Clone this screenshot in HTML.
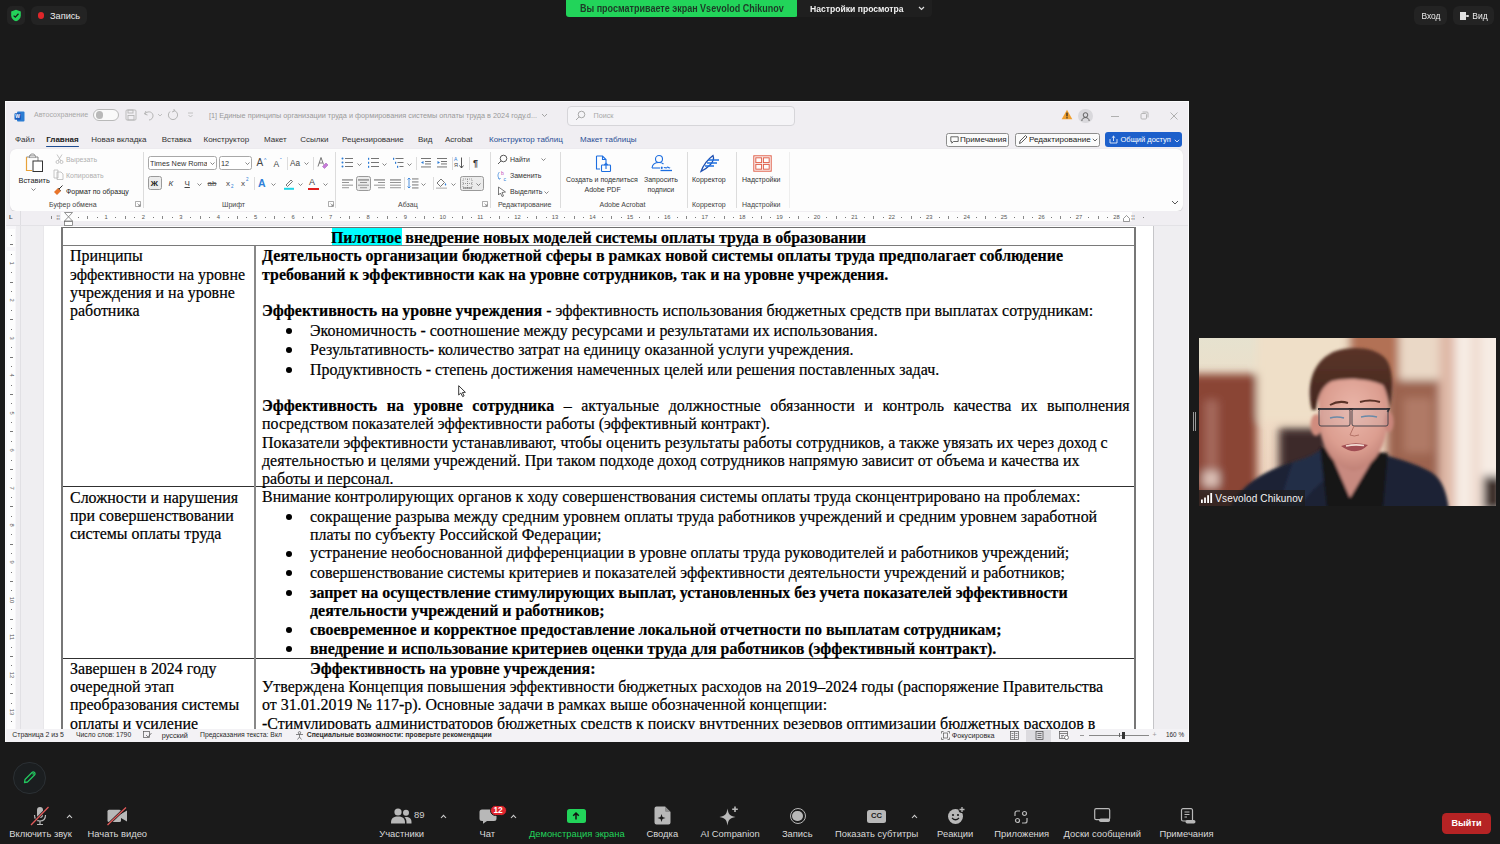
<!DOCTYPE html><html><head><meta charset="utf-8"><style>
*{box-sizing:border-box}
html,body{margin:0;padding:0}
body{width:1500px;height:844px;overflow:hidden;background:#1a1a1a;position:relative;font-family:"Liberation Sans",sans-serif}
.a{position:absolute}
.t{position:absolute;white-space:pre;line-height:1}
.dl{position:absolute;white-space:pre;font-family:"Liberation Serif",serif;font-size:15.95px;line-height:18px;color:#000;-webkit-text-stroke:0.2px #000}
.dj{text-align:justify;text-align-last:justify;white-space:normal}
.bul{position:absolute;width:6px;height:6px;border-radius:50%;background:#000}
.zl{position:absolute;white-space:pre;font-size:9.4px;color:#d9d9d9;line-height:1}
.tab{position:absolute;white-space:pre;font-size:8px;color:#333;top:136px;line-height:1}
.rl{position:absolute;white-space:pre;font-size:7px;color:#333;line-height:1}
.gl{position:absolute;white-space:pre;font-size:7px;color:#444;line-height:1;top:200.5px}
.sep{position:absolute;width:1px;background:#dcdcdc}
.st{position:absolute;white-space:pre;font-size:6.9px;color:#2a2a2a;line-height:1;top:732.1px}
</style></head><body>
<div class="a" style="left:0;top:0;width:1500px;height:844px;background:#1a1a1a"></div>
<div class="a" style="left:7px;top:6px;width:18px;height:19px;border-radius:5px;background:#232323"></div>
<svg class="a" style="left:10px;top:9px" width="12" height="13" viewBox="0 0 12 13"><path d="M6 0.8 L10.8 2.6 V6.4 C10.8 9.2 8.8 11.3 6 12.2 C3.2 11.3 1.2 9.2 1.2 6.4 V2.6 Z" fill="#24d25a"/><path d="M3.6 6.6 L5.3 8.2 L8.5 4.8" stroke="#1a1a1a" stroke-width="1.3" fill="none"/></svg>
<div class="a" style="left:31px;top:6px;width:56px;height:19px;border-radius:6px;background:#232323"></div>
<div class="a" style="left:37.5px;top:12px;width:6.5px;height:6.5px;border-radius:50%;background:#e0262a"></div>
<div class="t" style="left:50px;top:11.5px;font-size:9.2px;color:#ececec">Запись</div>

<div class="a" style="left:566px;top:-4px;width:232px;height:21px;border-radius:0 0 3px 3px;background:#22d45a"></div>
<div class="a" style="left:797px;top:-4px;width:135px;height:21px;border-radius:0 0 4px 0;background:#1f1f1f"></div>
<div class="t" style="left:580px;top:4.2px;font-size:9px;font-weight:bold;color:#1d3a27;transform:scaleY(1.15);transform-origin:0 0">Вы просматриваете экран Vsevolod Chikunov</div>
<div class="t" style="left:810px;top:4.2px;font-size:8.6px;font-weight:bold;color:#f2f2f2;transform:scaleY(1.15);transform-origin:0 0">Настройки просмотра</div>
<svg class="a" style="left:918px;top:6px" width="7" height="5" viewBox="0 0 7 5"><path d="M1 1 L3.5 3.5 L6 1" stroke="#ddd" stroke-width="1.2" fill="none"/></svg>

<div class="a" style="left:1414px;top:6px;width:33px;height:19px;border-radius:6px;background:#232323"></div>
<div class="t" style="left:1421.5px;top:10.5px;font-size:8.4px;color:#ececec;transform:scaleY(1.12);transform-origin:0 0">Вход</div>
<div class="a" style="left:1453px;top:6px;width:41px;height:19px;border-radius:6px;background:#232323"></div>
<div class="a" style="left:1460px;top:11.7px;width:5.5px;height:8.5px;background:#e0e0e0"></div>
<div class="a" style="left:1466px;top:14.5px;width:2.5px;height:2.5px;border-radius:50%;background:#e0e0e0"></div>
<div class="t" style="left:1472.3px;top:10.5px;font-size:8.5px;color:#ececec;transform:scaleY(1.12);transform-origin:0 0">Вид</div>

<div class="a" style="left:5px;top:101px;width:1184px;height:641px;background:#fbfbfc"></div>
<div class="a" style="left:6px;top:102px;width:1182px;height:639px;background:#f0eef2"></div>
<svg class="a" style="left:13.5px;top:110.5px" width="11" height="11" viewBox="0 0 11 11"><rect x="3" y="0.5" width="7.5" height="10" rx="1" fill="#2b7cd3"/><rect x="0.5" y="2.3" width="6.5" height="6.5" rx="0.8" fill="#185abd"/><text x="3.7" y="7.4" font-size="5" font-weight="bold" fill="#fff" text-anchor="middle" font-family="Liberation Sans">W</text></svg>
<div class="t" style="left:34px;top:112px;font-size:7.1px;color:#a8a8a8">Автосохранение</div>
<div class="a" style="left:93px;top:109px;width:25.5px;height:11.5px;border-radius:6px;border:1px solid #b9b9b9;background:#fafafa"></div>
<div class="a" style="left:95.5px;top:111px;width:7.5px;height:7.5px;border-radius:50%;background:#b9b9b9"></div>
<svg class="a" style="left:125px;top:109px" width="12" height="12" viewBox="0 0 12 12" fill="none" stroke="#b5b5b5" stroke-width="0.9"><rect x="1" y="1" width="10" height="10" rx="1"/><rect x="3" y="1" width="5" height="3"/><rect x="3" y="6.5" width="6" height="4.5"/></svg>
<svg class="a" style="left:143px;top:109px" width="22" height="12" viewBox="0 0 22 12" fill="none" stroke="#b5b5b5" stroke-width="1"><path d="M3 2 L1.5 5 L4.5 6"/><path d="M1.8 5 C4 2 9 2 10 6 C10.5 9 8 11 6 11"/><path d="M15 5 L17 7 L19 5" stroke-width="0.8"/></svg>
<svg class="a" style="left:167px;top:109px" width="12" height="12" viewBox="0 0 12 12" fill="none" stroke="#b5b5b5" stroke-width="1"><path d="M7 1.5 A4.6 4.6 0 1 1 3 2.5"/><path d="M7 0 L7.2 2.2 L5 3"/></svg>
<svg class="a" style="left:187px;top:112px" width="7" height="6" viewBox="0 0 7 6" fill="none" stroke="#b5b5b5" stroke-width="0.8"><path d="M1 1 H6 M1.5 3 L3.5 5 L5.5 3"/></svg>
<div class="t" style="left:209px;top:112px;font-size:7.3px;color:#9a9a9a">[1] Единые принципы организации труда и формирования системы оплаты труда в 2024 году.d...</div>
<svg class="a" style="left:541px;top:113px" width="7" height="5" viewBox="0 0 7 5"><path d="M1 1 L3.5 3.5 L6 1" stroke="#9a9a9a" stroke-width="0.9" fill="none"/></svg>
<div class="a" style="left:567px;top:105.5px;width:228px;height:20px;border-radius:4px;border:1px solid #d6d5d9;background:#f5f4f7"></div>
<svg class="a" style="left:575px;top:110px" width="11" height="11" viewBox="0 0 11 11" fill="none" stroke="#a0a0a0" stroke-width="0.9"><circle cx="6.5" cy="4.5" r="3.3"/><path d="M4.2 6.8 L1 10"/></svg>
<div class="t" style="left:593.5px;top:111.5px;font-size:7.2px;color:#a8a8a8">Поиск</div>
<svg class="a" style="left:1061px;top:109px" width="12" height="11" viewBox="0 0 12 11"><path d="M6 0.8 L11.3 10.3 H0.7 Z" fill="#f0a030"/><rect x="5.4" y="3.6" width="1.2" height="3.8" fill="#222"/><rect x="5.4" y="8.2" width="1.2" height="1.2" fill="#222"/></svg>
<div class="a" style="left:1078px;top:108.5px;width:14.5px;height:14.5px;border-radius:50%;background:#d9d8dc"></div>
<svg class="a" style="left:1080px;top:110.5px" width="11" height="11" viewBox="0 0 11 11" fill="none" stroke="#555" stroke-width="0.9"><circle cx="5.5" cy="4" r="2.3"/><path d="M1.8 10 C2 7.5 3.5 6.6 5.5 6.6 C7.5 6.6 9 7.5 9.2 10"/></svg>
<div class="a" style="left:1111px;top:115.5px;width:8px;height:1px;background:#b0b0b0"></div>
<svg class="a" style="left:1140px;top:111px" width="9" height="9" viewBox="0 0 9 9" fill="none" stroke="#b0b0b0" stroke-width="0.9"><rect x="1" y="2.5" width="5.5" height="5.5" rx="1"/><path d="M2.5 1 H7 A1 1 0 0 1 8 2 V6.5"/></svg>
<svg class="a" style="left:1170px;top:111.5px" width="8" height="8" viewBox="0 0 8 8" stroke="#a8a8a8" stroke-width="0.9"><path d="M0.5 0.5 L7.5 7.5 M7.5 0.5 L0.5 7.5"/></svg>

<div class="tab" style="left:15.0px;color:#333;">Файл</div>
<div class="tab" style="left:46.2px;color:#222;font-weight:bold;">Главная</div>
<div class="tab" style="left:91.3px;color:#333;">Новая вкладка</div>
<div class="tab" style="left:161.7px;color:#333;">Вставка</div>
<div class="tab" style="left:203.5px;color:#333;">Конструктор</div>
<div class="tab" style="left:264.0px;color:#333;">Макет</div>
<div class="tab" style="left:300.3px;color:#333;">Ссылки</div>
<div class="tab" style="left:342.0px;color:#333;">Рецензирование</div>
<div class="tab" style="left:418.0px;color:#333;">Вид</div>
<div class="tab" style="left:445.0px;color:#333;">Acrobat</div>
<div class="tab" style="left:489.0px;color:#2a4f96;">Конструктор таблиц</div>
<div class="tab" style="left:580.0px;color:#2a4f96;">Макет таблицы</div>
<div class="a" style="left:46px;top:145.8px;width:33px;height:1.6px;background:#1d4c91;border-radius:1px"></div>
<div class="a" style="left:946px;top:132.5px;width:63px;height:14px;border:1px solid #8d8d8d;border-radius:2.5px;background:#fbfbfb"></div>
<svg class="a" style="left:950px;top:135.5px" width="9" height="8" viewBox="0 0 9 8" fill="none" stroke="#444" stroke-width="0.8"><path d="M0.8 0.8 H8.2 V5.5 H3.5 L1.8 7.2 V5.5 H0.8 Z"/></svg>
<div class="t" style="left:960px;top:135.8px;font-size:8.1px;color:#222">Примечания</div>
<div class="a" style="left:1014.5px;top:132.5px;width:85px;height:14px;border:1px solid #8d8d8d;border-radius:2.5px;background:#fbfbfb"></div>
<svg class="a" style="left:1018px;top:134px" width="10" height="11" viewBox="0 0 10 11" fill="none" stroke="#333" stroke-width="0.8"><path d="M1.5 9.5 L2 7 L7.5 1.5 L9 3 L3.5 8.5 Z"/></svg>
<div class="t" style="left:1029px;top:135.8px;font-size:8.1px;color:#222">Редактирование</div>
<svg class="a" style="left:1092px;top:138px" width="6" height="4" viewBox="0 0 6 4"><path d="M0.8 0.8 L3 3 L5.2 0.8" stroke="#444" stroke-width="0.8" fill="none"/></svg>
<div class="a" style="left:1105px;top:132.3px;width:76.5px;height:14.7px;border-radius:3px;background:#1c5fcb"></div>
<svg class="a" style="left:1109px;top:135px" width="9" height="9" viewBox="0 0 9 9" fill="none" stroke="#fff" stroke-width="0.8"><path d="M1 4 V8 H8 V4"/><path d="M4.5 6 V1.2 M2.8 2.8 L4.5 1.2 L6.2 2.8"/></svg>
<div class="t" style="left:1120.5px;top:135.8px;font-size:7.5px;color:#fff">Общий доступ</div>
<svg class="a" style="left:1173.5px;top:138.5px" width="6" height="4" viewBox="0 0 6 4"><path d="M0.8 0.8 L3 3 L5.2 0.8" stroke="#fff" stroke-width="0.8" fill="none"/></svg>

<div class="a" style="left:9.5px;top:149px;width:1173.5px;height:61.5px;border-radius:6px;background:#fdfdfd;box-shadow:0 0.5px 1px rgba(0,0,0,0.12)"></div>
<svg class="a" style="left:25px;top:153px" width="19" height="20" viewBox="0 0 19 20">
<path d="M1.5 4 H5 V2.8 C5 1.6 6 1 7.5 1 C9 1 10 1.6 10 2.8 V4 H13 V8" fill="none" stroke="#777" stroke-width="0.9"/>
<path d="M1.5 4 V17.5 H7" fill="none" stroke="#e8a23a" stroke-width="1.2"/>
<rect x="8" y="8" width="9.5" height="10.5" fill="#fff" stroke="#333" stroke-width="1"/>
<rect x="4.5" y="2.8" width="6" height="2" fill="#ddd" stroke="#777" stroke-width="0.5"/>
</svg>
<div class="rl" style="left:18.5px;top:177.2px;font-size:7.4px;color:#222">Вставить</div>
<svg class="a" style="left:30.5px;top:188px" width="5" height="3" viewBox="0 0 5 3"><path d="M0.5 0.5 L2.5 2.5 L4.5 0.5" stroke="#555" stroke-width="0.7" fill="none"/></svg>
<svg class="a" style="left:55px;top:154px" width="9" height="10" viewBox="0 0 9 10" fill="none" stroke="#b8b8b8" stroke-width="0.8"><path d="M2 0.5 L6 7 M7 0.5 L3 7"/><circle cx="2.5" cy="8" r="1.5"/><circle cx="6.5" cy="8" r="1.5"/></svg>
<div class="rl" style="left:66px;top:156px;color:#b0b0b0">Вырезать</div>
<svg class="a" style="left:53px;top:169px" width="11" height="11" viewBox="0 0 11 11" fill="none" stroke="#b8b8b8" stroke-width="0.8"><path d="M1 1 H5 V9 H1 Z"/><path d="M4 3 H8 L10 5 V10.5 H4 Z"/></svg>
<div class="rl" style="left:66px;top:172px;color:#b0b0b0">Копировать</div>
<svg class="a" style="left:53px;top:185px" width="11" height="11" viewBox="0 0 11 11"><path d="M1 7 L5 3 L8 6 L4 10 Z" fill="#e8742a"/><path d="M6 4 L9.5 0.5" stroke="#333" stroke-width="1"/><path d="M5 3 L8 6" stroke="#333" stroke-width="0.6"/></svg>
<div class="rl" style="left:66px;top:188px;color:#222">Формат по образцу</div>
<div class="gl" style="left:49px">Буфер обмена</div>
<svg class="a" style="left:134.5px;top:201px" width="6" height="6" viewBox="0 0 6 6" fill="none" stroke="#777" stroke-width="0.6"><path d="M0.5 0.5 H5.5 V5.5 H0.5 Z M2.5 2.5 L5 5 M5 3 V5 H3"/></svg>
<div class="sep" style="left:142.5px;top:152px;height:56px"></div>
<div class="a" style="left:148px;top:156.3px;width:69px;height:14px;border:1px solid #a8a8a8;border-radius:2.5px;background:#fff"></div>
<div class="rl" style="left:150px;top:160px;font-size:7.3px;color:#333;width:57px;overflow:hidden">Times New Roman</div>
<svg class="a" style="left:209.5px;top:162px" width="5" height="3" viewBox="0 0 5 3"><path d="M0.5 0.5 L2.5 2.5 L4.5 0.5" stroke="#555" stroke-width="0.7" fill="none"/></svg>
<div class="a" style="left:219px;top:156.3px;width:33px;height:14px;border:1px solid #a8a8a8;border-radius:2.5px;background:#fff"></div>
<div class="rl" style="left:221px;top:160px;font-size:7.3px;color:#333">12</div>
<svg class="a" style="left:245px;top:162px" width="5" height="3" viewBox="0 0 5 3"><path d="M0.5 0.5 L2.5 2.5 L4.5 0.5" stroke="#555" stroke-width="0.7" fill="none"/></svg>
<div class="rl" style="left:256.5px;top:158px;font-size:10px;color:#444">A</div><div class="rl" style="left:264px;top:157.5px;font-size:5px;color:#2a7ad5">^</div>
<div class="rl" style="left:273.5px;top:159.5px;font-size:8.5px;color:#444">A</div><div class="rl" style="left:280px;top:157.5px;font-size:5px;color:#2a7ad5">ˇ</div>
<div class="sep" style="left:286.5px;top:157px;height:13px"></div>
<div class="rl" style="left:290px;top:160px;font-size:8.2px;color:#444">Aa</div>
<svg class="a" style="left:304px;top:162px" width="5" height="3" viewBox="0 0 5 3"><path d="M0.5 0.5 L2.5 2.5 L4.5 0.5" stroke="#555" stroke-width="0.7" fill="none"/></svg>
<div class="sep" style="left:313px;top:157px;height:13px"></div>
<svg class="a" style="left:317px;top:156px" width="12" height="13" viewBox="0 0 12 13"><path d="M1 10.5 L4 1.5 L6.5 8.5 M2.2 7 H5.5" fill="none" stroke="#555" stroke-width="0.8"/><path d="M5.5 10.5 L9 7 L11 9 L7.5 12.5 Z" fill="#c77ad8" stroke="#8a3aa8" stroke-width="0.4"/></svg>
<div class="a" style="left:148px;top:176.3px;width:14px;height:14px;border:1px solid #9a9a9a;border-radius:2.5px;background:#ececec"></div>
<div class="rl" style="left:150.8px;top:179.8px;font-size:8px;font-weight:bold;color:#222">Ж</div>
<div class="rl" style="left:168.5px;top:179.8px;font-size:8px;font-style:italic;color:#444">К</div>
<div class="rl" style="left:184.5px;top:179.5px;font-size:8px;color:#444;text-decoration:underline">Ч</div>
<svg class="a" style="left:197px;top:182.5px" width="5" height="3" viewBox="0 0 5 3"><path d="M0.5 0.5 L2.5 2.5 L4.5 0.5" stroke="#555" stroke-width="0.7" fill="none"/></svg>
<div class="rl" style="left:207.5px;top:180px;font-size:8px;color:#555;text-decoration:line-through">ab</div>
<div class="rl" style="left:226px;top:180px;font-size:8px;color:#444">x</div><div class="rl" style="left:231px;top:185px;font-size:4.5px;color:#2a7ad5">2</div>
<div class="rl" style="left:241px;top:180px;font-size:8px;color:#444">x</div><div class="rl" style="left:246px;top:178px;font-size:4.5px;color:#2a7ad5">2</div>
<div class="sep" style="left:253.5px;top:177px;height:13px"></div>
<div class="rl" style="left:258px;top:177.5px;font-size:10.5px;color:#2f7fd8;font-weight:bold">A</div>
<svg class="a" style="left:271px;top:182.5px" width="5" height="3" viewBox="0 0 5 3"><path d="M0.5 0.5 L2.5 2.5 L4.5 0.5" stroke="#555" stroke-width="0.7" fill="none"/></svg>
<svg class="a" style="left:283px;top:177px" width="12" height="13" viewBox="0 0 12 13"><path d="M3 8 L8 3 L9.5 4.5 L4.5 9.5 Z" fill="none" stroke="#555" stroke-width="0.8"/><rect x="1" y="10.8" width="10" height="2" fill="#1ed5e6"/></svg>
<svg class="a" style="left:298px;top:182.5px" width="5" height="3" viewBox="0 0 5 3"><path d="M0.5 0.5 L2.5 2.5 L4.5 0.5" stroke="#555" stroke-width="0.7" fill="none"/></svg>
<div class="rl" style="left:309px;top:178px;font-size:9px;color:#444">A</div><div class="a" style="left:308px;top:188px;width:10.5px;height:2px;background:#e01e1e"></div>
<svg class="a" style="left:323px;top:182.5px" width="5" height="3" viewBox="0 0 5 3"><path d="M0.5 0.5 L2.5 2.5 L4.5 0.5" stroke="#555" stroke-width="0.7" fill="none"/></svg>
<div class="gl" style="left:222px">Шрифт</div>
<svg class="a" style="left:328px;top:201px" width="6" height="6" viewBox="0 0 6 6" fill="none" stroke="#777" stroke-width="0.6"><path d="M0.5 0.5 H5.5 V5.5 H0.5 Z M2.5 2.5 L5 5 M5 3 V5 H3"/></svg>
<div class="sep" style="left:334.5px;top:152px;height:56px"></div>
<svg class="a" style="left:341px;top:157px" width="13" height="11" viewBox="0 0 13 11"><circle cx="1.5" cy="1.5" r="1" fill="#2a7ad5"/><circle cx="1.5" cy="5.5" r="1" fill="#2a7ad5"/><circle cx="1.5" cy="9.5" r="1" fill="#2a7ad5"/><rect x="4" y="1" width="8" height="0.9" fill="#666"/><rect x="4" y="5" width="8" height="0.9" fill="#666"/><rect x="4" y="9" width="8" height="0.9" fill="#666"/></svg>
<svg class="a" style="left:357.0px;top:162.5px" width="5" height="3" viewBox="0 0 5 3"><path d="M0.5 0.5 L2.5 2.5 L4.5 0.5" stroke="#555" stroke-width="0.7" fill="none"/></svg>
<svg class="a" style="left:367px;top:157px" width="13" height="11" viewBox="0 0 13 11"><rect x="1" y="0.8" width="1.2" height="2" fill="#2a7ad5"/><rect x="1" y="4.8" width="1.2" height="2" fill="#2a7ad5"/><rect x="1" y="8.8" width="1.2" height="2" fill="#2a7ad5"/><rect x="4" y="1" width="8" height="0.9" fill="#666"/><rect x="4" y="5" width="8" height="0.9" fill="#666"/><rect x="4" y="9" width="8" height="0.9" fill="#666"/></svg>
<svg class="a" style="left:382.0px;top:162.5px" width="5" height="3" viewBox="0 0 5 3"><path d="M0.5 0.5 L2.5 2.5 L4.5 0.5" stroke="#555" stroke-width="0.7" fill="none"/></svg>
<svg class="a" style="left:392px;top:157px" width="13" height="11" viewBox="0 0 13 11"><rect x="1" y="0.8" width="1.2" height="2" fill="#2a7ad5"/><rect x="3" y="4.8" width="1.2" height="2" fill="#2a7ad5"/><rect x="5" y="8.8" width="1.2" height="2" fill="#2a7ad5"/><rect x="3.5" y="1" width="8" height="0.9" fill="#666"/><rect x="5.5" y="5" width="6" height="0.9" fill="#666"/><rect x="7.5" y="9" width="4" height="0.9" fill="#666"/></svg>
<svg class="a" style="left:406.5px;top:162.5px" width="5" height="3" viewBox="0 0 5 3"><path d="M0.5 0.5 L2.5 2.5 L4.5 0.5" stroke="#555" stroke-width="0.7" fill="none"/></svg>
<div class="sep" style="left:416px;top:157px;height:13px"></div>
<svg class="a" style="left:420px;top:157px" width="12" height="11" viewBox="0 0 12 11"><rect x="1" y="1" width="10" height="0.9" fill="#666"/><rect x="5" y="4" width="6" height="0.9" fill="#666"/><rect x="5" y="6.5" width="6" height="0.9" fill="#666"/><rect x="1" y="9.5" width="10" height="0.9" fill="#666"/><path d="M1 5.5 L3.5 4 V7 Z" fill="#2a7ad5"/></svg>
<svg class="a" style="left:436px;top:157px" width="12" height="11" viewBox="0 0 12 11"><rect x="1" y="1" width="10" height="0.9" fill="#666"/><rect x="5" y="4" width="6" height="0.9" fill="#666"/><rect x="5" y="6.5" width="6" height="0.9" fill="#666"/><rect x="1" y="9.5" width="10" height="0.9" fill="#666"/><path d="M4 5.5 L1.5 4 V7 Z" fill="#2a7ad5"/></svg>
<div class="sep" style="left:451.5px;top:157px;height:13px"></div>
<div class="rl" style="left:454px;top:157px;font-size:5px;color:#2a7ad5">A</div><div class="rl" style="left:454px;top:163px;font-size:5.5px;color:#444">Я</div><svg class="a" style="left:459px;top:157px" width="5" height="12" viewBox="0 0 5 12"><path d="M2.5 0.5 V11 M0.5 8.5 L2.5 11 L4.5 8.5" stroke="#444" stroke-width="0.9" fill="none"/></svg>
<div class="sep" style="left:469px;top:157px;height:13px"></div>
<div class="rl" style="left:473px;top:158.5px;font-size:9px;font-weight:bold;color:#333">¶</div>
<svg class="a" style="left:341.0px;top:178.0px" width="13" height="11" viewBox="0 0 13 11"><rect x="1.0" y="1.5" width="11.0" height="0.9" fill="#555"/><rect x="1.0" y="4.1" width="7.0" height="0.9" fill="#8a8a8a"/><rect x="1.0" y="6.7" width="11.0" height="0.9" fill="#8a8a8a"/><rect x="1.0" y="9.3" width="7.0" height="0.9" fill="#8a8a8a"/></svg>
<div class="a" style="left:356px;top:176.3px;width:15px;height:14.5px;border:1px solid #9a9a9a;border-radius:2.5px;background:#ececec"></div>
<svg class="a" style="left:357.0px;top:178.0px" width="13" height="11" viewBox="0 0 13 11"><rect x="1.0" y="1.5" width="11.0" height="0.9" fill="#555"/><rect x="3.0" y="4.1" width="7.0" height="0.9" fill="#8a8a8a"/><rect x="1.0" y="6.7" width="11.0" height="0.9" fill="#8a8a8a"/><rect x="3.0" y="9.3" width="7.0" height="0.9" fill="#8a8a8a"/></svg>
<svg class="a" style="left:373.0px;top:178.0px" width="13" height="11" viewBox="0 0 13 11"><rect x="1.0" y="1.5" width="11.0" height="0.9" fill="#555"/><rect x="5.0" y="4.1" width="7.0" height="0.9" fill="#8a8a8a"/><rect x="1.0" y="6.7" width="11.0" height="0.9" fill="#8a8a8a"/><rect x="5.0" y="9.3" width="7.0" height="0.9" fill="#8a8a8a"/></svg>
<svg class="a" style="left:389.0px;top:178.0px" width="13" height="11" viewBox="0 0 13 11"><rect x="1.0" y="1.5" width="11.0" height="0.9" fill="#555"/><rect x="1.0" y="4.1" width="11.0" height="0.9" fill="#8a8a8a"/><rect x="1.0" y="6.7" width="11.0" height="0.9" fill="#8a8a8a"/><rect x="1.0" y="9.3" width="11.0" height="0.9" fill="#8a8a8a"/></svg>
<div class="sep" style="left:404px;top:177px;height:13px"></div>
<svg class="a" style="left:407px;top:177px" width="12" height="12" viewBox="0 0 12 12"><path d="M2 1 V11 M0.5 2.5 L2 1 L3.5 2.5 M0.5 9.5 L2 11 L3.5 9.5" stroke="#2a7ad5" stroke-width="0.8" fill="none"/><rect x="5" y="1.5" width="6.5" height="0.9" fill="#666"/><rect x="5" y="4.5" width="6.5" height="0.9" fill="#666"/><rect x="5" y="7.5" width="6.5" height="0.9" fill="#666"/><rect x="5" y="10.5" width="6.5" height="0.9" fill="#666"/></svg>
<svg class="a" style="left:421.0px;top:182.5px" width="5" height="3" viewBox="0 0 5 3"><path d="M0.5 0.5 L2.5 2.5 L4.5 0.5" stroke="#555" stroke-width="0.7" fill="none"/></svg>
<div class="sep" style="left:432.5px;top:177px;height:13px"></div>
<svg class="a" style="left:435px;top:177px" width="13" height="12" viewBox="0 0 13 12"><path d="M2 6 L6 2 L9.5 5.5 L5.5 9.5 Z" fill="none" stroke="#555" stroke-width="0.8"/><path d="M10.5 6 C11.5 7.5 11.5 8.5 10.5 8.5 C9.5 8.5 9.5 7.5 10.5 6" fill="#2a7ad5"/><rect x="1" y="10.5" width="11" height="1.3" fill="#bbb"/></svg>
<svg class="a" style="left:451.0px;top:182.5px" width="5" height="3" viewBox="0 0 5 3"><path d="M0.5 0.5 L2.5 2.5 L4.5 0.5" stroke="#555" stroke-width="0.7" fill="none"/></svg>
<div class="a" style="left:460px;top:176.3px;width:24px;height:14.5px;border:1px solid #9a9a9a;border-radius:2.5px;background:#ececec"></div>
<svg class="a" style="left:462px;top:178px" width="11" height="11" viewBox="0 0 11 11" fill="none" stroke="#666" stroke-width="0.6" stroke-dasharray="1 1"><rect x="1" y="1" width="9" height="9"/><path d="M5.5 1 V10 M1 5.5 H10"/><path d="M1 10 H10" stroke-dasharray="none" stroke-width="0.9"/></svg>
<svg class="a" style="left:476.0px;top:182.5px" width="5" height="3" viewBox="0 0 5 3"><path d="M0.5 0.5 L2.5 2.5 L4.5 0.5" stroke="#555" stroke-width="0.7" fill="none"/></svg>
<div class="gl" style="left:398px">Абзац</div>
<svg class="a" style="left:482px;top:201px" width="6" height="6" viewBox="0 0 6 6" fill="none" stroke="#777" stroke-width="0.6"><path d="M0.5 0.5 H5.5 V5.5 H0.5 Z M2.5 2.5 L5 5 M5 3 V5 H3"/></svg>
<div class="sep" style="left:489.5px;top:152px;height:56px"></div>
<svg class="a" style="left:497px;top:153.5px" width="11" height="11" viewBox="0 0 11 11" fill="none" stroke="#444" stroke-width="0.9"><circle cx="6.5" cy="4.5" r="3.3"/><path d="M4.2 6.8 L1 10"/></svg>
<div class="rl" style="left:510px;top:155.5px;color:#333">Найти</div>
<svg class="a" style="left:541.0px;top:157.5px" width="5" height="3" viewBox="0 0 5 3"><path d="M0.5 0.5 L2.5 2.5 L4.5 0.5" stroke="#555" stroke-width="0.7" fill="none"/></svg>
<svg class="a" style="left:497px;top:170px" width="11" height="11" viewBox="0 0 11 11"><text x="4" y="5" font-size="5" fill="#c03fb5" font-family="Liberation Sans">b</text><text x="6.5" y="10.5" font-size="5" fill="#2a7ad5" font-family="Liberation Sans">c</text><path d="M2.5 2 C0.5 4 0.5 7 2.5 9 M1.2 8 L2.5 9.3 L3.5 8" stroke="#2a7ad5" stroke-width="0.7" fill="none"/></svg>
<div class="rl" style="left:510px;top:172px;color:#333">Заменить</div>
<svg class="a" style="left:497px;top:186px" width="10" height="11" viewBox="0 0 10 11"><path d="M1.5 1 L8.5 6 L5 6.5 L6.5 10 L5 10.5 L3.5 7 L1.5 9 Z" fill="#fff" stroke="#444" stroke-width="0.7"/></svg>
<div class="rl" style="left:510px;top:188px;color:#333">Выделить</div>
<svg class="a" style="left:544.0px;top:190.5px" width="5" height="3" viewBox="0 0 5 3"><path d="M0.5 0.5 L2.5 2.5 L4.5 0.5" stroke="#555" stroke-width="0.7" fill="none"/></svg>
<div class="gl" style="left:498px">Редактирование</div>
<div class="sep" style="left:559.5px;top:152px;height:56px"></div>
<svg class="a" style="left:595px;top:154.5px" width="17" height="18" viewBox="0 0 17 18" fill="none" stroke="#1d6ee0" stroke-width="1.1"><path d="M1.5 1 H7.5 L11 4.5 V8"/><path d="M1.5 1 V14 H5"/><path d="M7.5 1 V4.5 H11"/><rect x="6.5" y="10" width="9" height="6.5" rx="0.8"/><path d="M11 14 V8.5 M9.3 10 L11 8.3 L12.7 10"/></svg>
<div class="rl" style="left:566px;top:175.7px;color:#333">Создать и поделиться</div>
<div class="rl" style="left:584.5px;top:185.7px;color:#333">Adobe PDF</div>
<svg class="a" style="left:651px;top:153.5px" width="22" height="18" viewBox="0 0 22 18" fill="none" stroke="#1d6ee0" stroke-width="1.1"><circle cx="8" cy="5" r="3.5"/><path d="M1 14 C1.5 10 4 8.5 8 8.5 C10 8.5 11.5 9 12.5 10"/><path d="M1 14 H9"/><path d="M10 13 L11.5 14.5 M11.5 13 L10 14.5 M13 14 C14 12.5 15 15 16 13.5 C17 12 18 15 19 13.5"/><path d="M9.5 16.5 H21" stroke-width="1.3"/></svg>
<div class="rl" style="left:644px;top:175.7px;color:#333">Запросить</div>
<div class="rl" style="left:647.5px;top:185.7px;color:#333">подписи</div>
<div class="gl" style="left:599.5px">Adobe Acrobat</div>
<div class="sep" style="left:686.5px;top:152px;height:56px"></div>
<svg class="a" style="left:699px;top:153.5px" width="23" height="19" viewBox="0 0 23 19"><path d="M2 17.5 C4 12 8 6 14 1.5 C15 4 14 8 11 11 C8 14 5 16 2 17.5 Z" fill="none" stroke="#1e4fb0" stroke-width="1.3"/><path d="M9 6 H20 M8 9 H18 M6 12 H15" stroke="#1e6fe0" stroke-width="1.6"/></svg>
<div class="rl" style="left:692px;top:175.7px;color:#333">Корректор</div>
<div class="gl" style="left:692px">Корректор</div>
<div class="sep" style="left:735.5px;top:152px;height:56px"></div>
<svg class="a" style="left:752.5px;top:154.5px" width="19" height="17" viewBox="0 0 19 17" fill="none" stroke="#e0604a" stroke-width="1"><rect x="0.8" y="0.8" width="17.4" height="15.4"/><rect x="2.8" y="2.8" width="5.8" height="4.8"/><rect x="10.4" y="2.8" width="5.8" height="4.8"/><rect x="2.8" y="9.4" width="5.8" height="4.8"/><rect x="10.4" y="9.4" width="5.8" height="4.8"/></svg>
<div class="rl" style="left:742px;top:175.7px;color:#333">Надстройки</div>
<div class="gl" style="left:742px">Надстройки</div>
<div class="sep" style="left:789px;top:152px;height:56px;background:#eee"></div>
<svg class="a" style="left:1170.5px;top:199.5px" width="8" height="5" viewBox="0 0 8 5"><path d="M1 1 L4 4 L7 1" stroke="#444" stroke-width="0.9" fill="none"/></svg>
<div class="a" style="left:6px;top:210.5px;width:1182px;height:15px;background:#f0eef2"></div>
<div class="a" style="left:19.5px;top:211px;width:1px;height:14.5px;background:#dedde1"></div>
<div class="rl" style="left:9px;top:214px;font-size:6px;font-weight:bold;color:#555">L</div>
<div class="a" style="left:61px;top:212px;width:1071px;height:9px;background:#fdfdfd"></div>
<div class="a" style="left:6px;top:225px;width:1182px;height:1px;background:#e3e2e6"></div>
<div class="rl" style="left:102.0px;top:215.3px;font-size:5.8px;color:#555;width:8px;text-align:center">1</div>
<div class="rl" style="left:139.4px;top:215.3px;font-size:5.8px;color:#555;width:8px;text-align:center">2</div>
<div class="rl" style="left:176.9px;top:215.3px;font-size:5.8px;color:#555;width:8px;text-align:center">3</div>
<div class="rl" style="left:214.3px;top:215.3px;font-size:5.8px;color:#555;width:8px;text-align:center">4</div>
<div class="rl" style="left:251.7px;top:215.3px;font-size:5.8px;color:#555;width:8px;text-align:center">5</div>
<div class="rl" style="left:289.1px;top:215.3px;font-size:5.8px;color:#555;width:8px;text-align:center">6</div>
<div class="rl" style="left:326.5px;top:215.3px;font-size:5.8px;color:#555;width:8px;text-align:center">7</div>
<div class="rl" style="left:364.0px;top:215.3px;font-size:5.8px;color:#555;width:8px;text-align:center">8</div>
<div class="rl" style="left:401.4px;top:215.3px;font-size:5.8px;color:#555;width:8px;text-align:center">9</div>
<div class="rl" style="left:438.8px;top:215.3px;font-size:5.8px;color:#555;width:8px;text-align:center">10</div>
<div class="rl" style="left:476.2px;top:215.3px;font-size:5.8px;color:#555;width:8px;text-align:center">11</div>
<div class="rl" style="left:513.6px;top:215.3px;font-size:5.8px;color:#555;width:8px;text-align:center">12</div>
<div class="rl" style="left:551.1px;top:215.3px;font-size:5.8px;color:#555;width:8px;text-align:center">13</div>
<div class="rl" style="left:588.5px;top:215.3px;font-size:5.8px;color:#555;width:8px;text-align:center">14</div>
<div class="rl" style="left:625.9px;top:215.3px;font-size:5.8px;color:#555;width:8px;text-align:center">15</div>
<div class="rl" style="left:663.3px;top:215.3px;font-size:5.8px;color:#555;width:8px;text-align:center">16</div>
<div class="rl" style="left:700.7px;top:215.3px;font-size:5.8px;color:#555;width:8px;text-align:center">17</div>
<div class="rl" style="left:738.2px;top:215.3px;font-size:5.8px;color:#555;width:8px;text-align:center">18</div>
<div class="rl" style="left:775.6px;top:215.3px;font-size:5.8px;color:#555;width:8px;text-align:center">19</div>
<div class="rl" style="left:813.0px;top:215.3px;font-size:5.8px;color:#555;width:8px;text-align:center">20</div>
<div class="rl" style="left:850.4px;top:215.3px;font-size:5.8px;color:#555;width:8px;text-align:center">21</div>
<div class="rl" style="left:887.8px;top:215.3px;font-size:5.8px;color:#555;width:8px;text-align:center">22</div>
<div class="rl" style="left:925.3px;top:215.3px;font-size:5.8px;color:#555;width:8px;text-align:center">23</div>
<div class="rl" style="left:962.7px;top:215.3px;font-size:5.8px;color:#555;width:8px;text-align:center">24</div>
<div class="rl" style="left:1000.1px;top:215.3px;font-size:5.8px;color:#555;width:8px;text-align:center">25</div>
<div class="rl" style="left:1037.5px;top:215.3px;font-size:5.8px;color:#555;width:8px;text-align:center">26</div>
<div class="rl" style="left:1074.9px;top:215.3px;font-size:5.8px;color:#555;width:8px;text-align:center">27</div>
<div class="rl" style="left:1112.4px;top:215.3px;font-size:5.8px;color:#555;width:8px;text-align:center">28</div>
<div class="a" style="left:78.0px;top:216.5px;width:1px;height:1px;background:#777"></div>
<div class="a" style="left:96.7px;top:216.5px;width:1px;height:1px;background:#777"></div>
<div class="a" style="left:87.3px;top:215.5px;width:0.8px;height:3px;background:#888"></div>
<div class="a" style="left:115.4px;top:216.5px;width:1px;height:1px;background:#777"></div>
<div class="a" style="left:134.1px;top:216.5px;width:1px;height:1px;background:#777"></div>
<div class="a" style="left:124.7px;top:215.5px;width:0.8px;height:3px;background:#888"></div>
<div class="a" style="left:152.8px;top:216.5px;width:1px;height:1px;background:#777"></div>
<div class="a" style="left:171.5px;top:216.5px;width:1px;height:1px;background:#777"></div>
<div class="a" style="left:162.2px;top:215.5px;width:0.8px;height:3px;background:#888"></div>
<div class="a" style="left:190.2px;top:216.5px;width:1px;height:1px;background:#777"></div>
<div class="a" style="left:208.9px;top:216.5px;width:1px;height:1px;background:#777"></div>
<div class="a" style="left:199.6px;top:215.5px;width:0.8px;height:3px;background:#888"></div>
<div class="a" style="left:227.6px;top:216.5px;width:1px;height:1px;background:#777"></div>
<div class="a" style="left:246.3px;top:216.5px;width:1px;height:1px;background:#777"></div>
<div class="a" style="left:237.0px;top:215.5px;width:0.8px;height:3px;background:#888"></div>
<div class="a" style="left:265.1px;top:216.5px;width:1px;height:1px;background:#777"></div>
<div class="a" style="left:283.8px;top:216.5px;width:1px;height:1px;background:#777"></div>
<div class="a" style="left:274.4px;top:215.5px;width:0.8px;height:3px;background:#888"></div>
<div class="a" style="left:302.5px;top:216.5px;width:1px;height:1px;background:#777"></div>
<div class="a" style="left:321.2px;top:216.5px;width:1px;height:1px;background:#777"></div>
<div class="a" style="left:311.8px;top:215.5px;width:0.8px;height:3px;background:#888"></div>
<div class="a" style="left:339.9px;top:216.5px;width:1px;height:1px;background:#777"></div>
<div class="a" style="left:358.6px;top:216.5px;width:1px;height:1px;background:#777"></div>
<div class="a" style="left:349.2px;top:215.5px;width:0.8px;height:3px;background:#888"></div>
<div class="a" style="left:377.3px;top:216.5px;width:1px;height:1px;background:#777"></div>
<div class="a" style="left:396.0px;top:216.5px;width:1px;height:1px;background:#777"></div>
<div class="a" style="left:386.7px;top:215.5px;width:0.8px;height:3px;background:#888"></div>
<div class="a" style="left:414.7px;top:216.5px;width:1px;height:1px;background:#777"></div>
<div class="a" style="left:433.4px;top:216.5px;width:1px;height:1px;background:#777"></div>
<div class="a" style="left:424.1px;top:215.5px;width:0.8px;height:3px;background:#888"></div>
<div class="a" style="left:452.2px;top:216.5px;width:1px;height:1px;background:#777"></div>
<div class="a" style="left:470.9px;top:216.5px;width:1px;height:1px;background:#777"></div>
<div class="a" style="left:461.5px;top:215.5px;width:0.8px;height:3px;background:#888"></div>
<div class="a" style="left:489.6px;top:216.5px;width:1px;height:1px;background:#777"></div>
<div class="a" style="left:508.3px;top:216.5px;width:1px;height:1px;background:#777"></div>
<div class="a" style="left:498.9px;top:215.5px;width:0.8px;height:3px;background:#888"></div>
<div class="a" style="left:527.0px;top:216.5px;width:1px;height:1px;background:#777"></div>
<div class="a" style="left:545.7px;top:216.5px;width:1px;height:1px;background:#777"></div>
<div class="a" style="left:536.4px;top:215.5px;width:0.8px;height:3px;background:#888"></div>
<div class="a" style="left:564.4px;top:216.5px;width:1px;height:1px;background:#777"></div>
<div class="a" style="left:583.1px;top:216.5px;width:1px;height:1px;background:#777"></div>
<div class="a" style="left:573.8px;top:215.5px;width:0.8px;height:3px;background:#888"></div>
<div class="a" style="left:601.8px;top:216.5px;width:1px;height:1px;background:#777"></div>
<div class="a" style="left:620.5px;top:216.5px;width:1px;height:1px;background:#777"></div>
<div class="a" style="left:611.2px;top:215.5px;width:0.8px;height:3px;background:#888"></div>
<div class="a" style="left:639.3px;top:216.5px;width:1px;height:1px;background:#777"></div>
<div class="a" style="left:658.0px;top:216.5px;width:1px;height:1px;background:#777"></div>
<div class="a" style="left:648.6px;top:215.5px;width:0.8px;height:3px;background:#888"></div>
<div class="a" style="left:676.7px;top:216.5px;width:1px;height:1px;background:#777"></div>
<div class="a" style="left:695.4px;top:216.5px;width:1px;height:1px;background:#777"></div>
<div class="a" style="left:686.0px;top:215.5px;width:0.8px;height:3px;background:#888"></div>
<div class="a" style="left:714.1px;top:216.5px;width:1px;height:1px;background:#777"></div>
<div class="a" style="left:732.8px;top:216.5px;width:1px;height:1px;background:#777"></div>
<div class="a" style="left:723.5px;top:215.5px;width:0.8px;height:3px;background:#888"></div>
<div class="a" style="left:751.5px;top:216.5px;width:1px;height:1px;background:#777"></div>
<div class="a" style="left:770.2px;top:216.5px;width:1px;height:1px;background:#777"></div>
<div class="a" style="left:760.9px;top:215.5px;width:0.8px;height:3px;background:#888"></div>
<div class="a" style="left:788.9px;top:216.5px;width:1px;height:1px;background:#777"></div>
<div class="a" style="left:807.6px;top:216.5px;width:1px;height:1px;background:#777"></div>
<div class="a" style="left:798.3px;top:215.5px;width:0.8px;height:3px;background:#888"></div>
<div class="a" style="left:826.4px;top:216.5px;width:1px;height:1px;background:#777"></div>
<div class="a" style="left:845.1px;top:216.5px;width:1px;height:1px;background:#777"></div>
<div class="a" style="left:835.7px;top:215.5px;width:0.8px;height:3px;background:#888"></div>
<div class="a" style="left:863.8px;top:216.5px;width:1px;height:1px;background:#777"></div>
<div class="a" style="left:882.5px;top:216.5px;width:1px;height:1px;background:#777"></div>
<div class="a" style="left:873.1px;top:215.5px;width:0.8px;height:3px;background:#888"></div>
<div class="a" style="left:901.2px;top:216.5px;width:1px;height:1px;background:#777"></div>
<div class="a" style="left:919.9px;top:216.5px;width:1px;height:1px;background:#777"></div>
<div class="a" style="left:910.6px;top:215.5px;width:0.8px;height:3px;background:#888"></div>
<div class="a" style="left:938.6px;top:216.5px;width:1px;height:1px;background:#777"></div>
<div class="a" style="left:957.3px;top:216.5px;width:1px;height:1px;background:#777"></div>
<div class="a" style="left:948.0px;top:215.5px;width:0.8px;height:3px;background:#888"></div>
<div class="a" style="left:976.0px;top:216.5px;width:1px;height:1px;background:#777"></div>
<div class="a" style="left:994.7px;top:216.5px;width:1px;height:1px;background:#777"></div>
<div class="a" style="left:985.4px;top:215.5px;width:0.8px;height:3px;background:#888"></div>
<div class="a" style="left:1013.5px;top:216.5px;width:1px;height:1px;background:#777"></div>
<div class="a" style="left:1032.2px;top:216.5px;width:1px;height:1px;background:#777"></div>
<div class="a" style="left:1022.8px;top:215.5px;width:0.8px;height:3px;background:#888"></div>
<div class="a" style="left:1050.9px;top:216.5px;width:1px;height:1px;background:#777"></div>
<div class="a" style="left:1069.6px;top:216.5px;width:1px;height:1px;background:#777"></div>
<div class="a" style="left:1060.2px;top:215.5px;width:0.8px;height:3px;background:#888"></div>
<div class="a" style="left:1088.3px;top:216.5px;width:1px;height:1px;background:#777"></div>
<div class="a" style="left:1107.0px;top:216.5px;width:1px;height:1px;background:#777"></div>
<div class="a" style="left:1097.6px;top:215.5px;width:0.8px;height:3px;background:#888"></div>
<div class="a" style="left:1125.7px;top:216.5px;width:1px;height:1px;background:#777"></div>
<div class="a" style="left:51px;top:215.5px;width:0.8px;height:3px;background:#888"></div>
<svg class="a" style="left:63.5px;top:211.5px" width="9" height="14" viewBox="0 0 9 14" fill="#fff" stroke="#666" stroke-width="0.7"><path d="M0.5 0.5 H8.5 L4.5 4.8 L8.5 9 H0.5 L4.5 4.8 Z"/><rect x="0.5" y="9.5" width="8" height="4"/></svg>
<div class="rl" style="left:58px;top:213.5px;font-size:7px;color:#666">⁞</div><div class="rl" style="left:56.3px;top:213.5px;font-size:7px;color:#666">⁞</div>
<svg class="a" style="left:1123px;top:213px" width="9" height="9" viewBox="0 0 9 9" fill="#fff" stroke="#555" stroke-width="0.6"><path d="M0.5 8.5 V5.5 L3.5 2.5 L6.5 5.5 V8.5 Z"/></svg>
<div class="rl" style="left:1131px;top:213.5px;font-size:7px;color:#666">⁞⁞</div>
<div class="a" style="left:1143px;top:217px;width:1px;height:1px;background:#888"></div>
<div class="a" style="left:6px;top:225.5px;width:1182px;height:503px;background:#efeef1;overflow:hidden">
</div>
<div class="a" style="left:44px;top:225.5px;width:1109.5px;height:503px;background:#ffffff"></div>
<div class="a" style="left:1153px;top:225.5px;width:1px;height:503px;background:#c5c5c8"></div>

<div class="a" style="left:6px;top:225.5px;width:9.5px;height:503px;background:#f7f6f9"></div>
<div class="a" style="left:7px;top:229px;width:8px;height:18px;background:#fdfdfd"></div>
<div class="a" style="left:7px;top:251px;width:8px;height:478px;background:#fdfdfd"></div>
<div class="a" style="left:19.5px;top:225.5px;width:1px;height:503px;background:#e1e0e4"></div>
<div class="a" style="left:43px;top:225.5px;width:1px;height:503px;background:#e8e7ea"></div>
<div class="rl" style="left:7px;top:260.0px;width:8px;height:6px;font-size:5.8px;color:#555;text-align:center;transform:rotate(90deg)">1</div>
<div class="rl" style="left:7px;top:297.4px;width:8px;height:6px;font-size:5.8px;color:#555;text-align:center;transform:rotate(90deg)">2</div>
<div class="rl" style="left:7px;top:334.9px;width:8px;height:6px;font-size:5.8px;color:#555;text-align:center;transform:rotate(90deg)">3</div>
<div class="rl" style="left:7px;top:372.3px;width:8px;height:6px;font-size:5.8px;color:#555;text-align:center;transform:rotate(90deg)">4</div>
<div class="rl" style="left:7px;top:409.7px;width:8px;height:6px;font-size:5.8px;color:#555;text-align:center;transform:rotate(90deg)">5</div>
<div class="rl" style="left:7px;top:447.1px;width:8px;height:6px;font-size:5.8px;color:#555;text-align:center;transform:rotate(90deg)">6</div>
<div class="rl" style="left:7px;top:484.5px;width:8px;height:6px;font-size:5.8px;color:#555;text-align:center;transform:rotate(90deg)">7</div>
<div class="rl" style="left:7px;top:522.0px;width:8px;height:6px;font-size:5.8px;color:#555;text-align:center;transform:rotate(90deg)">8</div>
<div class="rl" style="left:7px;top:559.4px;width:8px;height:6px;font-size:5.8px;color:#555;text-align:center;transform:rotate(90deg)">9</div>
<div class="rl" style="left:7px;top:596.8px;width:8px;height:6px;font-size:5.8px;color:#555;text-align:center;transform:rotate(90deg)">10</div>
<div class="rl" style="left:7px;top:634.2px;width:8px;height:6px;font-size:5.8px;color:#555;text-align:center;transform:rotate(90deg)">11</div>
<div class="rl" style="left:7px;top:671.6px;width:8px;height:6px;font-size:5.8px;color:#555;text-align:center;transform:rotate(90deg)">12</div>
<div class="rl" style="left:7px;top:709.1px;width:8px;height:6px;font-size:5.8px;color:#555;text-align:center;transform:rotate(90deg)">13</div>
<div class="a" style="left:10.5px;top:235.0px;width:1.5px;height:1px;background:#777"></div>
<div class="a" style="left:10.5px;top:253.7px;width:1.5px;height:1px;background:#777"></div>
<div class="a" style="left:9.5px;top:244.3px;width:3px;height:1px;background:#777"></div>
<div class="a" style="left:10.5px;top:272.4px;width:1.5px;height:1px;background:#777"></div>
<div class="a" style="left:10.5px;top:291.1px;width:1.5px;height:1px;background:#777"></div>
<div class="a" style="left:9.5px;top:281.7px;width:3px;height:1px;background:#777"></div>
<div class="a" style="left:10.5px;top:309.8px;width:1.5px;height:1px;background:#777"></div>
<div class="a" style="left:10.5px;top:328.5px;width:1.5px;height:1px;background:#777"></div>
<div class="a" style="left:9.5px;top:319.1px;width:3px;height:1px;background:#777"></div>
<div class="a" style="left:10.5px;top:347.2px;width:1.5px;height:1px;background:#777"></div>
<div class="a" style="left:10.5px;top:365.9px;width:1.5px;height:1px;background:#777"></div>
<div class="a" style="left:9.5px;top:356.6px;width:3px;height:1px;background:#777"></div>
<div class="a" style="left:10.5px;top:384.6px;width:1.5px;height:1px;background:#777"></div>
<div class="a" style="left:10.5px;top:403.3px;width:1.5px;height:1px;background:#777"></div>
<div class="a" style="left:9.5px;top:394.0px;width:3px;height:1px;background:#777"></div>
<div class="a" style="left:10.5px;top:422.1px;width:1.5px;height:1px;background:#777"></div>
<div class="a" style="left:10.5px;top:440.8px;width:1.5px;height:1px;background:#777"></div>
<div class="a" style="left:9.5px;top:431.4px;width:3px;height:1px;background:#777"></div>
<div class="a" style="left:10.5px;top:459.5px;width:1.5px;height:1px;background:#777"></div>
<div class="a" style="left:10.5px;top:478.2px;width:1.5px;height:1px;background:#777"></div>
<div class="a" style="left:9.5px;top:468.8px;width:3px;height:1px;background:#777"></div>
<div class="a" style="left:10.5px;top:496.9px;width:1.5px;height:1px;background:#777"></div>
<div class="a" style="left:10.5px;top:515.6px;width:1.5px;height:1px;background:#777"></div>
<div class="a" style="left:9.5px;top:506.2px;width:3px;height:1px;background:#777"></div>
<div class="a" style="left:10.5px;top:534.3px;width:1.5px;height:1px;background:#777"></div>
<div class="a" style="left:10.5px;top:553.0px;width:1.5px;height:1px;background:#777"></div>
<div class="a" style="left:9.5px;top:543.7px;width:3px;height:1px;background:#777"></div>
<div class="a" style="left:10.5px;top:571.7px;width:1.5px;height:1px;background:#777"></div>
<div class="a" style="left:10.5px;top:590.4px;width:1.5px;height:1px;background:#777"></div>
<div class="a" style="left:9.5px;top:581.1px;width:3px;height:1px;background:#777"></div>
<div class="a" style="left:10.5px;top:609.2px;width:1.5px;height:1px;background:#777"></div>
<div class="a" style="left:10.5px;top:627.9px;width:1.5px;height:1px;background:#777"></div>
<div class="a" style="left:9.5px;top:618.5px;width:3px;height:1px;background:#777"></div>
<div class="a" style="left:10.5px;top:646.6px;width:1.5px;height:1px;background:#777"></div>
<div class="a" style="left:10.5px;top:665.3px;width:1.5px;height:1px;background:#777"></div>
<div class="a" style="left:9.5px;top:655.9px;width:3px;height:1px;background:#777"></div>
<div class="a" style="left:10.5px;top:684.0px;width:1.5px;height:1px;background:#777"></div>
<div class="a" style="left:10.5px;top:702.7px;width:1.5px;height:1px;background:#777"></div>
<div class="a" style="left:9.5px;top:693.4px;width:3px;height:1px;background:#777"></div>
<div class="a" style="left:10.5px;top:721.4px;width:1.5px;height:1px;background:#777"></div>
<div class="a" style="left:10.5px;top:740.1px;width:1.5px;height:1px;background:#777"></div>
<div class="a" style="left:9.5px;top:730.8px;width:3px;height:1px;background:#777"></div>
<div class="a" style="left:331.8px;top:227.4px;width:70.2px;height:18px;background:#00ffff"></div>
<div class="a" style="left:61px;top:226.5px;width:1074.5px;height:1.5px;background:#6f6f6f"></div>
<div class="a" style="left:61px;top:245px;width:1074.5px;height:1.4px;background:#7a7a7a"></div>
<div class="a" style="left:61px;top:486px;width:1074.5px;height:1px;background:#303030"></div>
<div class="a" style="left:61px;top:658px;width:1074.5px;height:1px;background:#303030"></div>
<div class="a" style="left:61px;top:226.5px;width:1.5px;height:502px;background:#777"></div>
<div class="a" style="left:1134px;top:226.5px;width:1.5px;height:502px;background:#777"></div>
<div class="a" style="left:254.3px;top:245.5px;width:1.3px;height:483px;background:#888"></div>

<div class="a" style="left:0;top:225.5px;width:1188px;height:503px;overflow:hidden">
<div class="a" style="left:0;top:-225.5px;width:1500px;height:844px">
<div class="dl" style="left:62.0px;top:228.5px;width:1073.0px;text-align:center"><b>Пилотное</b><b> внедрение новых моделей системы оплаты труда в образовании</b></div>
<div class="dl" style="left:70.0px;top:247.4px">Принципы</div>
<div class="dl" style="left:70.0px;top:265.6px">эффективности на уровне</div>
<div class="dl" style="left:70.0px;top:283.9px">учреждения и на уровне</div>
<div class="dl" style="left:70.0px;top:302.1px">работника</div>
<div class="dl" style="left:262.0px;top:247.4px"><b>Деятельность организации бюджетной сферы в рамках новой системы оплаты труда предполагает соблюдение</b></div>
<div class="dl" style="left:262.0px;top:265.6px"><b>требований к эффективности как на уровне сотрудников, так и на уровне учреждения.</b></div>
<div class="dl" style="left:262.0px;top:302.3px"><b>Эффективность на уровне учреждения</b> - эффективность использования бюджетных средств при выплатах сотрудникам:</div>
<div class="dl" style="left:310.0px;top:321.5px">Экономичность - соотношение между ресурсами и результатами их использования.</div>
<div class="dl" style="left:310.0px;top:341.0px">Результативность- количество затрат на единицу оказанной услуги учреждения.</div>
<div class="dl" style="left:310.0px;top:360.5px">Продуктивность - степень достижения намеченных целей или решения поставленных задач.</div>
<div class="dl dj" style="left:262.0px;top:396.8px;width:867.5px"><b>Эффективность на уровне сотрудника</b> – актуальные должностные обязанности и контроль качества их выполнения</div>
<div class="dl" style="left:262.0px;top:415.2px">посредством показателей эффективности работы (эффективный контракт).</div>
<div class="dl" style="left:262.0px;top:433.6px">Показатели эффективности устанавливают, чтобы оценить результаты работы сотрудников, а также увязать их через доход с</div>
<div class="dl" style="left:262.0px;top:451.9px">деятельностью и целями учреждений. При таком подходе доход сотрудников напрямую зависит от объема и качества их</div>
<div class="dl" style="left:262.0px;top:470.0px">работы и персонал.</div>
<div class="dl" style="left:70.0px;top:488.6px">Сложности и нарушения</div>
<div class="dl" style="left:70.0px;top:506.8px">при совершенствовании</div>
<div class="dl" style="left:70.0px;top:525.1px">системы оплаты труда</div>
<div class="dl" style="left:262.0px;top:488.3px">Внимание контролирующих органов к ходу совершенствования системы оплаты труда сконцентрировано на проблемах:</div>
<div class="dl" style="left:310.0px;top:507.7px">сокращение разрыва между средним уровнем оплаты труда работников учреждений и средним уровнем заработной</div>
<div class="dl" style="left:310.0px;top:525.9px">платы по субъекту Российской Федерации;</div>
<div class="dl" style="left:310.0px;top:544.3px">устранение необоснованной дифференциации в уровне оплаты труда руководителей и работников учреждений;</div>
<div class="dl" style="left:310.0px;top:563.8px">совершенствование системы критериев и показателей эффективности деятельности учреждений и работников;</div>
<div class="dl" style="left:310.0px;top:583.5px"><b>запрет на осуществление стимулирующих выплат, установленных без учета показателей эффективности</b></div>
<div class="dl" style="left:310.0px;top:601.7px"><b>деятельности учреждений и работников;</b></div>
<div class="dl" style="left:310.0px;top:621.1px"><b>своевременное и корректное предоставление локальной отчетности по выплатам сотрудникам;</b></div>
<div class="dl" style="left:310.0px;top:640.1px"><b>внедрение и использование критериев оценки труда для работников (эффективный контракт).</b></div>
<div class="dl" style="left:70.0px;top:660.0px">Завершен в 2024 году</div>
<div class="dl" style="left:70.0px;top:678.1px">очередной этап</div>
<div class="dl" style="left:70.0px;top:696.3px">преобразования системы</div>
<div class="dl" style="left:70.0px;top:714.5px">оплаты и усиление</div>
<div class="dl" style="left:310.0px;top:660.0px"><b>Эффективность на уровне учреждения:</b></div>
<div class="dl" style="left:262.0px;top:678.2px">Утверждена Концепция повышения эффективности бюджетных расходов на 2019–2024 годы (распоряжение Правительства</div>
<div class="dl" style="left:262.0px;top:696.4px">от 31.01.2019 № 117-р). Основные задачи в рамках выше обозначенной концепции:</div>
<div class="dl" style="left:262.0px;top:714.5px">-Стимулировать администраторов бюджетных средств к поиску внутренних резервов оптимизации бюджетных расходов в</div>
<div class="bul" style="left:285.8px;top:327.8px"></div>
<div class="bul" style="left:285.8px;top:347.3px"></div>
<div class="bul" style="left:285.8px;top:366.8px"></div>
<div class="bul" style="left:285.8px;top:514.0px"></div>
<div class="bul" style="left:285.8px;top:550.6px"></div>
<div class="bul" style="left:285.8px;top:570.1px"></div>
<div class="bul" style="left:285.8px;top:589.8px"></div>
<div class="bul" style="left:285.8px;top:627.4px"></div>
<div class="bul" style="left:285.8px;top:646.4px"></div>
</div></div>
<svg class="a" style="left:458px;top:384.8px" width="9" height="13" viewBox="0 0 9 13"><path d="M0.7 0.7 L0.7 10 L2.8 8 L4.6 11.6 L6.1 10.9 L4.4 7.5 L7.4 7.3 Z" fill="#fff" stroke="#222" stroke-width="0.9"/></svg>
<div class="a" style="left:6px;top:728.5px;width:1182px;height:13px;background:#f3f2f5"></div>
<div class="st" style="left:12.3px;font-size:6.90px;">Страница 2 из 5</div>
<div class="st" style="left:76.0px;font-size:6.80px;">Число слов: 1790</div>
<div class="st" style="left:161.7px;font-size:7.30px;">русский</div>
<div class="st" style="left:200.0px;font-size:6.80px;">Предсказания текста: Вкл</div>
<div class="st" style="left:306.7px;font-size:6.85px;font-weight:bold">Специальные возможности: проверьте рекомендации</div>
<div class="st" style="left:951.7px;font-size:7.20px;">Фокусировка</div>
<svg class="a" style="left:143px;top:731px" width="9" height="8" viewBox="0 0 9 8" fill="none" stroke="#555" stroke-width="0.7"><rect x="0.5" y="0.5" width="6" height="6"/><path d="M3 4 L5 6 L8.5 2"/></svg>
<svg class="a" style="left:295px;top:730.5px" width="9" height="9" viewBox="0 0 9 9" fill="none" stroke="#555" stroke-width="0.7"><circle cx="4.5" cy="1.8" r="1.2"/><path d="M1 3.5 H8 M4.5 3.5 V6 L2.5 8.5 M4.5 6 L6.5 8.5"/></svg>
<svg class="a" style="left:941px;top:730.5px" width="9" height="9" viewBox="0 0 9 9" fill="none" stroke="#555" stroke-width="0.7"><path d="M0.5 2.5 V0.5 H2.5 M6.5 0.5 H8.5 V2.5 M8.5 6.5 V8.5 H6.5 M2.5 8.5 H0.5 V6.5"/><rect x="2.5" y="2" width="4" height="5"/></svg>
<svg class="a" style="left:1009.5px;top:730.5px" width="9" height="9" viewBox="0 0 9 9" fill="none" stroke="#555" stroke-width="0.7"><rect x="0.5" y="0.5" width="8" height="8"/><path d="M4.5 0.5 V8.5 M1.5 2.5 H3.5 M1.5 4.5 H3.5 M1.5 6.5 H3.5 M5.5 2.5 H7.5 M5.5 4.5 H7.5 M5.5 6.5 H7.5"/></svg>
<div class="a" style="left:1026px;top:729.5px;width:25.3px;height:12px;background:#dcdbdf"></div>
<svg class="a" style="left:1034.5px;top:730.5px" width="9" height="9" viewBox="0 0 9 9" fill="none" stroke="#444" stroke-width="0.7"><rect x="1" y="0.5" width="7" height="8"/><path d="M2.5 2.5 H6.5 M2.5 4.5 H6.5 M2.5 6.5 H6.5"/></svg>
<svg class="a" style="left:1059px;top:730.5px" width="10" height="9" viewBox="0 0 10 9" fill="none" stroke="#555" stroke-width="0.7"><rect x="0.5" y="0.5" width="8" height="7"/><path d="M0.5 2.5 H8.5 M2 4.5 H5 M2 6 H4"/><circle cx="7.5" cy="6.5" r="2" fill="#fff"/></svg>
<div class="a" style="left:1080px;top:735px;width:4px;height:0.8px;background:#999"></div>
<div class="a" style="left:1088.5px;top:735px;width:60.5px;height:0.8px;background:#888"></div>
<div class="a" style="left:1122px;top:731.5px;width:2.5px;height:7px;background:#333"></div>
<div class="a" style="left:1119px;top:733px;width:0.8px;height:4px;background:#666"></div>
<div class="rl" style="left:1152.5px;top:731px;font-size:7px;color:#999">+</div>
<div class="st" style="left:1166px;font-size:6.4px">160 %</div>
<div class="a" style="left:1198.5px;top:338px;width:297px;height:168px;overflow:hidden;background:#ead8c4">
<svg width="297" height="168" viewBox="0 0 297 168" style="position:absolute;left:0;top:0">
<defs>
<filter id="bl" x="-30%" y="-30%" width="160%" height="160%"><feGaussianBlur stdDeviation="4.5"/></filter>
<filter id="bl2" x="-20%" y="-20%" width="140%" height="140%"><feGaussianBlur stdDeviation="1.6"/></filter>
<filter id="bl1" x="-20%" y="-20%" width="140%" height="140%"><feGaussianBlur stdDeviation="0.6"/></filter>
<linearGradient id="wall" x1="0" y1="0" x2="0" y2="1"><stop offset="0" stop-color="#e6e2cf"/><stop offset="0.45" stop-color="#f0dcc6"/><stop offset="1" stop-color="#ecd0bc"/></linearGradient>
<radialGradient id="face" cx="0.5" cy="0.35" r="0.7"><stop offset="0" stop-color="#eab6aa"/><stop offset="0.6" stop-color="#dc9e90"/><stop offset="1" stop-color="#b97a70"/></radialGradient>
<linearGradient id="hair" x1="0" y1="0" x2="0" y2="1"><stop offset="0" stop-color="#5a3428"/><stop offset="1" stop-color="#43261e"/></linearGradient>
</defs>
<rect x="0" y="0" width="297" height="168" fill="url(#wall)"/>
<g filter="url(#bl)">
<rect x="-10" y="36" width="68" height="150" fill="#8a4536"/>
<rect x="6" y="62" width="13" height="70" fill="#a5695c"/>
<rect x="4" y="133" width="16" height="16" fill="#dcc0b6"/>
<rect x="150" y="-10" width="50" height="60" fill="#b27154"/>
<rect x="188" y="42" width="60" height="130" fill="#9c6450"/>
<rect x="205" y="60" width="28" height="55" fill="#b07a66"/>
<rect x="200" y="-10" width="48" height="52" fill="#ead8c6"/>
<rect x="248" y="-10" width="60" height="190" fill="#f6ece4"/>
<rect x="240" y="-10" width="16" height="190" fill="#dfb9a8"/>
<rect x="272" y="-10" width="10" height="190" fill="#f0dcd0"/>
<rect x="284" y="138" width="20" height="35" fill="#3b2b28"/>
<rect x="80" y="90" width="50" height="58" fill="#3c2c2a"/>
<rect x="58" y="-10" width="92" height="92" fill="#efdfc8"/>
</g>
<g filter="url(#bl2)">
<path d="M30 172 C40 150 60 134 94 124 C108 120 116 116 123 111 L130 172 L182 172 L186 117 C200 121 218 126 232 134 C244 142 248 156 250 172 Z" fill="#1c2235"/>
<path d="M94 124 C108 120 116 116 123 111 L128 140 C115 150 105 160 100 172 L80 172 C85 150 90 135 94 124 Z" fill="#283250" opacity="0.7"/>
<path d="M121 109 L189 115 L184 172 L128 172 Z" fill="#141217"/>
<path d="M131 114 L177 116 L151 160 Z" fill="#c88a80"/>
<path d="M119 48 C122 38 184 38 188 48 L189 84 C187 108 176 129 155 133 C134 130 123 110 120 86 Z" fill="url(#face)"/>
<ellipse cx="117" cy="87" rx="5.5" ry="11" fill="#d08c7e"/>
<ellipse cx="190" cy="84" rx="4.5" ry="10" fill="#c9857a"/>
<path d="M113 72 C108 52 110 26 134 14 C150 8 174 8 186 20 C195 30 194 52 191 70 C189 60 187 52 184 47 C172 41 148 39 133 43 C124 47 119 56 117 72 Z" fill="url(#hair)"/>
</g>
<g filter="url(#bl1)">
<path d="M119 71 H190 L188.5 74" stroke="#2e2a2e" stroke-width="1.8" fill="none"/>
<rect x="120" y="71" width="31" height="17" rx="2" fill="rgba(190,210,230,0.12)" stroke="#4a454a" stroke-width="1"/>
<rect x="153" y="71" width="36" height="17" rx="2" fill="rgba(190,210,230,0.12)" stroke="#4a454a" stroke-width="1"/>
<path d="M131 67 Q140 62 149 65 M161 64 Q171 61 181 64" stroke="#5a3028" stroke-width="2" fill="none"/>
<path d="M131 80 Q138 78 145 80 M162 79 Q170 77 178 79" stroke="#6a8aa8" stroke-width="1.4" fill="none"/>
<path d="M142 108 Q155 103 169 107 Q157 119 142 108 Z" fill="#a04e52"/>
<path d="M147 108 Q156 106 165 107.5" stroke="#f2dcd4" stroke-width="1.6" fill="none"/>
<path d="M155 88 L151 97 Q155 99 160 97" stroke="#b37266" stroke-width="1" fill="none"/>
</g>
</svg>
<div class="a" style="left:0;top:152px;width:106px;height:16px;background:rgba(28,28,28,0.75)"></div>
<svg class="a" style="left:2.3px;top:155px" width="12" height="10" viewBox="0 0 12 10" fill="#fff"><rect x="0" y="6.5" width="1.8" height="3.5"/><rect x="3.1" y="4.5" width="1.8" height="5.5"/><rect x="6.2" y="2.2" width="1.8" height="7.8"/><rect x="9.3" y="0" width="1.8" height="10"/></svg>
<div class="t" style="left:16.8px;top:156.2px;font-size:10px;letter-spacing:0.12px;color:#f4f4f4">Vsevolod Chikunov</div>
</div>
<div class="a" style="left:1192.5px;top:412px;width:1px;height:19px;background:#9a9a9a"></div><div class="a" style="left:1194.5px;top:412px;width:1px;height:19px;background:#9a9a9a"></div>
<div class="a" style="left:13px;top:761.5px;width:32.5px;height:32.5px;border-radius:50%;background:#1b1e20;border:1px solid #2b3034"></div>
<svg class="a" style="left:22px;top:770px" width="15" height="15" viewBox="0 0 15 15"><path d="M2.5 12.5 L3 9.5 L10 2.5 A1.6 1.6 0 0 1 12.5 5 L5.5 12 Z" fill="none" stroke="#22c55e" stroke-width="1.3" stroke-linejoin="round"/><circle cx="11.2" cy="3.8" r="0.9" fill="#22c55e"/></svg>
<svg class="a" style="left:30px;top:806px" width="20" height="20" viewBox="0 0 20 20"><rect x="7" y="1" width="6" height="11" rx="3" fill="#b8b8b8"/><path d="M4.5 9 C4.5 13 7 15 10 15 C13 15 15.5 13 15.5 9" fill="none" stroke="#b8b8b8" stroke-width="1.2"/><path d="M10 15 V18 M7 18.5 H13" stroke="#b8b8b8" stroke-width="1.2"/><path d="M1 19 L18.5 1" stroke="#1a1a1a" stroke-width="2.6"/><path d="M1 19 L18.5 1" stroke="#e05a5a" stroke-width="1.3"/></svg>
<svg class="a" style="left:66.0px;top:813.5px" width="7" height="5" viewBox="0 0 7 5"><path d="M1 4 L3.5 1.3 L6 4" stroke="#cfcfcf" stroke-width="1.1" fill="none"/></svg>
<div class="zl" style="left:-29.5px;top:828.5px;width:140px;text-align:center;color:#d9d9d9">Включить звук</div>
<svg class="a" style="left:107px;top:806px" width="21" height="20" viewBox="0 0 21 20"><rect x="0.5" y="3.8" width="13.5" height="12.2" rx="1.5" fill="#b8b8b8"/><path d="M14 8 L20 4.5 V15.5 L14 12 Z" fill="#b8b8b8"/><path d="M0.5 19 L19 1.5" stroke="#1a1a1a" stroke-width="2.6"/><path d="M0.5 19 L19 1.5" stroke="#e05a5a" stroke-width="1.3"/></svg>
<div class="zl" style="left:47.3px;top:828.5px;width:140px;text-align:center;color:#d9d9d9">Начать видео</div>
<svg class="a" style="left:391px;top:808px" width="21" height="16" viewBox="0 0 21 16" fill="#b8b8b8"><circle cx="7" cy="4" r="3.6"/><path d="M0 14.5 C0 10 3 8.5 7 8.5 C11 8.5 14 10 14 14.5 V15.5 H0 Z"/><circle cx="15" cy="4.8" r="3"/><path d="M15 9 C18.5 9 20.5 10.5 20.5 14 V15.5 H15.5 V14.5 C15.5 12 14.8 10.5 13.5 9.3 Z"/></svg>
<div class="zl" style="left:414px;top:809.5px;font-size:9.5px;color:#cfcfcf">89</div>
<svg class="a" style="left:439.5px;top:813.5px" width="7" height="5" viewBox="0 0 7 5"><path d="M1 4 L3.5 1.3 L6 4" stroke="#cfcfcf" stroke-width="1.1" fill="none"/></svg>
<div class="zl" style="left:331.7px;top:828.5px;width:140px;text-align:center;color:#d9d9d9">Участники</div>
<svg class="a" style="left:478.5px;top:808.5px" width="18" height="15" viewBox="0 0 18 15" fill="#b8b8b8"><path d="M3 0.5 H15 A2.5 2.5 0 0 1 17.5 3 V9.5 A2.5 2.5 0 0 1 15 12 H8 L4 14.8 V12 H3 A2.5 2.5 0 0 1 0.5 9.5 V3 A2.5 2.5 0 0 1 3 0.5 Z"/></svg>
<div class="a" style="left:489.5px;top:804.5px;width:17px;height:11.5px;border-radius:6px;background:#e0252e;border:1px solid #1a1a1a"></div>
<div class="zl" style="left:489.5px;top:806.3px;width:17px;text-align:center;font-size:8.3px;font-weight:bold;color:#fff">12</div>
<svg class="a" style="left:509.8px;top:813.5px" width="7" height="5" viewBox="0 0 7 5"><path d="M1 4 L3.5 1.3 L6 4" stroke="#cfcfcf" stroke-width="1.1" fill="none"/></svg>
<div class="zl" style="left:417.3px;top:828.5px;width:140px;text-align:center;color:#d9d9d9">Чат</div>
<div class="a" style="left:566.5px;top:808.5px;width:19.5px;height:14.5px;border-radius:2.5px;background:#22d45a"></div>
<svg class="a" style="left:571px;top:810.5px" width="10" height="10" viewBox="0 0 10 10"><path d="M5 8.5 V2 M2.2 4.8 L5 2 L7.8 4.8" stroke="#111" stroke-width="1.5" fill="none"/></svg>
<div class="zl" style="left:506.8px;top:828.5px;width:140px;text-align:center;color:#22d45a">Демонстрация экрана</div>
<svg class="a" style="left:654px;top:806px" width="17" height="19" viewBox="0 0 17 19"><path d="M2.5 0.5 H11 L16.5 6 V16.5 A2 2 0 0 1 14.5 18.5 H2.5 A2 2 0 0 1 0.5 16.5 V2.5 A2 2 0 0 1 2.5 0.5 Z" fill="#b8b8b8"/><path d="M11 0.5 V4.5 A1.5 1.5 0 0 0 12.5 6 H16.5" fill="#8a8a8a"/><path d="M7.5 8 L8.5 11 L11.5 12 L8.5 13 L7.5 16 L6.5 13 L3.5 12 L6.5 11 Z" fill="#1a1a1a"/></svg>
<div class="zl" style="left:592.3px;top:828.5px;width:140px;text-align:center;color:#d9d9d9">Сводка</div>
<svg class="a" style="left:719px;top:806px" width="21" height="20" viewBox="0 0 21 20" fill="#b8b8b8"><path d="M8.5 2.5 C9.5 8.5 10.5 9.8 16.5 11 C10.5 12.2 9.5 13.5 8.5 19.5 C7.5 13.5 6.5 12.2 0.5 11 C6.5 9.8 7.5 8.5 8.5 2.5 Z"/><path d="M16 0.5 V6 M13.2 3.2 H18.8" stroke="#b8b8b8" stroke-width="1.6"/></svg>
<div class="zl" style="left:660.1px;top:828.5px;width:140px;text-align:center;color:#d9d9d9">AI Companion</div>
<div class="a" style="left:789.5px;top:807.8px;width:16.5px;height:16.5px;border-radius:50%;border:1.3px solid #b8b8b8"></div>
<div class="a" style="left:792.3px;top:810.6px;width:10.9px;height:10.9px;border-radius:50%;background:#b8b8b8"></div>
<div class="zl" style="left:727.3px;top:828.5px;width:140px;text-align:center;color:#d9d9d9">Запись</div>
<div class="a" style="left:867px;top:809.5px;width:19px;height:13.2px;border-radius:2.5px;background:#b8b8b8"></div>
<div class="zl" style="left:867px;top:812px;width:19px;text-align:center;font-size:7.6px;font-weight:bold;color:#1a1a1a">CC</div>
<svg class="a" style="left:911.0px;top:813.5px" width="7" height="5" viewBox="0 0 7 5"><path d="M1 4 L3.5 1.3 L6 4" stroke="#cfcfcf" stroke-width="1.1" fill="none"/></svg>
<div class="zl" style="left:806.6px;top:828.5px;width:140px;text-align:center;color:#d9d9d9">Показать субтитры</div>
<svg class="a" style="left:947px;top:806px" width="18" height="19" viewBox="0 0 18 19"><circle cx="8.5" cy="10.5" r="7.5" fill="#b8b8b8"/><circle cx="6" cy="9" r="1.1" fill="#1a1a1a"/><circle cx="11" cy="9" r="1.1" fill="#1a1a1a"/><path d="M5 12 Q8.5 15.5 12 12" stroke="#1a1a1a" stroke-width="1.2" fill="none"/><circle cx="15" cy="3.5" r="3.5" fill="#1a1a1a"/><path d="M15 1 V6 M12.5 3.5 H17.5" stroke="#b8b8b8" stroke-width="1.3"/></svg>
<div class="zl" style="left:885.2px;top:828.5px;width:140px;text-align:center;color:#d9d9d9">Реакции</div>
<svg class="a" style="left:1014px;top:809.5px" width="14" height="14" viewBox="0 0 14 14" fill="none" stroke="#b8b8b8" stroke-width="1.2"><path d="M1 6 V3 A2 2 0 0 1 3 1 H6"/><path d="M13 8 V11 A2 2 0 0 1 11 13 H8"/><circle cx="10.5" cy="3.5" r="2"/><circle cx="3.5" cy="10.5" r="2"/></svg>
<div class="zl" style="left:951.7px;top:828.5px;width:140px;text-align:center;color:#d9d9d9">Приложения</div>
<svg class="a" style="left:1094px;top:808px" width="17" height="15" viewBox="0 0 17 15"><rect x="0.7" y="0.7" width="15" height="11" rx="1.5" fill="none" stroke="#b8b8b8" stroke-width="1.2"/><rect x="5" y="10.5" width="11" height="3.5" rx="1.7" fill="#b8b8b8"/></svg>
<div class="zl" style="left:1032.3px;top:828.5px;width:140px;text-align:center;color:#d9d9d9">Доски сообщений</div>
<svg class="a" style="left:1180px;top:808px" width="16" height="16" viewBox="0 0 16 16"><path d="M3 0.7 H11 A1.5 1.5 0 0 1 12.5 2.2 V13 H3 A1.5 1.5 0 0 1 1.5 11.5 V2.2 A1.5 1.5 0 0 1 3 0.7 Z" fill="none" stroke="#b8b8b8" stroke-width="1.2"/><path d="M4.5 4 H9.5 M4.5 6.5 H9.5 M4.5 9 H7" stroke="#b8b8b8" stroke-width="1.2"/><rect x="5.5" y="12" width="10" height="3.5" rx="1.7" fill="#b8b8b8"/></svg>
<div class="zl" style="left:1116.5px;top:828.5px;width:140px;text-align:center;color:#d9d9d9">Примечания</div>
<div class="a" style="left:1442px;top:813px;width:49px;height:21px;border-radius:4.5px;background:#b52324"></div>
<div class="zl" style="left:1442px;top:818.5px;width:49px;text-align:center;font-size:9.1px;font-weight:bold;color:#fff">Выйти</div>
</body></html>
